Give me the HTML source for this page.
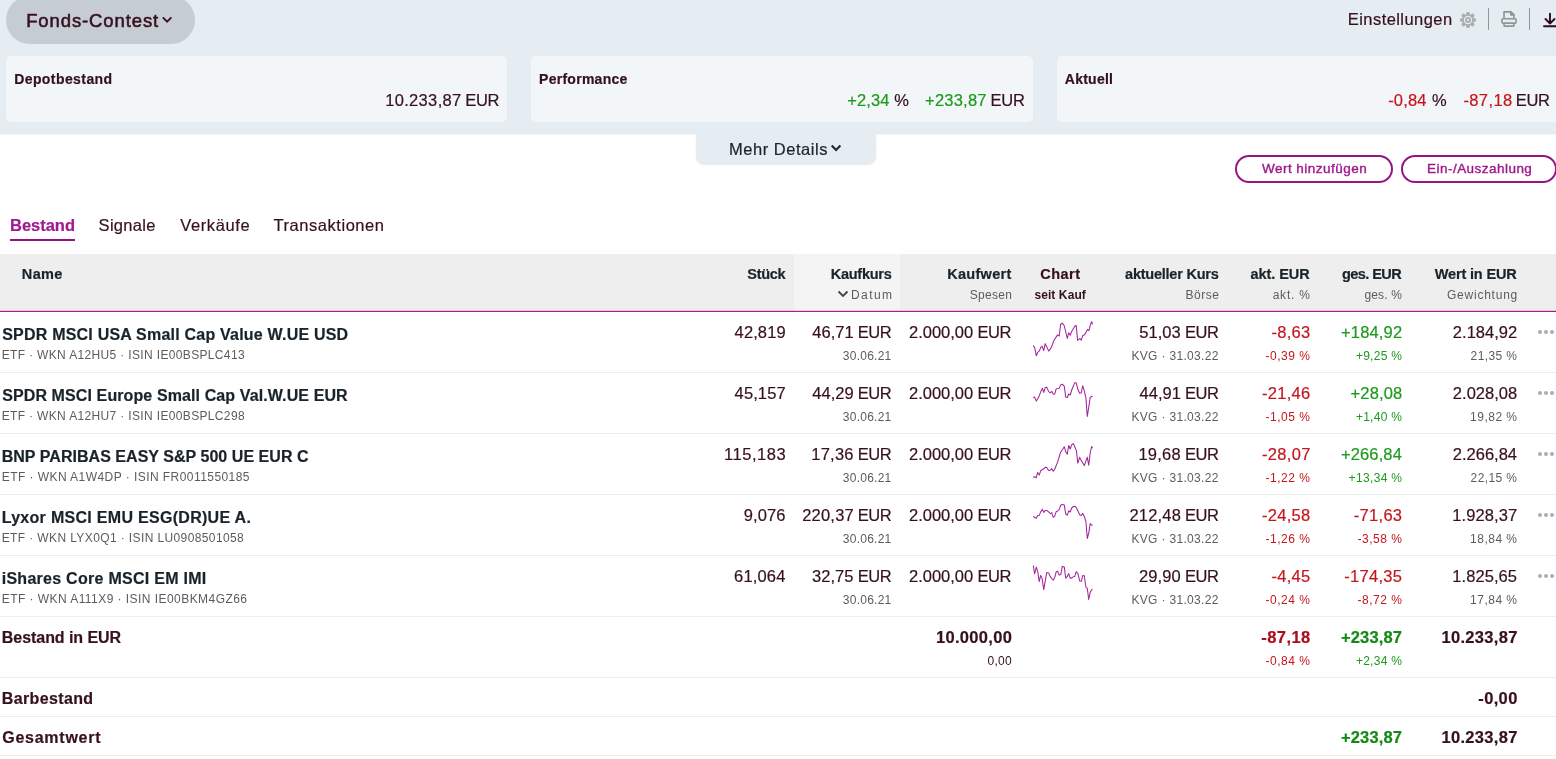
<!DOCTYPE html>
<html lang="de"><head><meta charset="utf-8"><title>Fonds-Contest</title>
<style>
html,body{margin:0;padding:0;}
body{width:1556px;height:759px;overflow:hidden;position:relative;background:#fff;
 font-family:"Liberation Sans",sans-serif;}
.abs{position:absolute;}
.page{left:0;top:0;width:1556px;height:759px;overflow:hidden;will-change:transform;}
.t{position:absolute;white-space:nowrap;line-height:1;}
.top{left:0;top:0;width:1556px;height:134px;background:#e5ecf2;}
.strip{left:0;top:134px;width:1556px;height:1px;background:#f1f5f8;}
.pill{left:6px;top:-4px;width:189px;height:48px;border-radius:24px;background:#c6ccd3;}
.card{top:56px;height:66px;border-radius:5px;background:#f2f6f9;}
.more{left:696px;top:134px;width:180px;height:29px;background:#e5ecf2;border-radius:0 0 7px 7px;
 box-shadow:0 2px 3px -1px rgba(0,0,0,.16);}
.btn{top:155px;height:24px;border:2px solid #9a1283;border-radius:14px;background:#fff;}
.ul{left:10px;top:239px;width:65px;height:2px;background:#9a0c80;}
.thead{left:0;top:254px;width:1556px;height:57px;background:#eeeeee;}
.sorted{left:794px;top:254px;width:106px;height:57px;background:#f4f4f4;}
.pl{left:0;top:311px;width:1556px;height:1px;background:#a11f8f;box-shadow:0 -1px 0 rgba(161,31,143,.18);}
.hl{left:0;width:1556px;height:1px;background:#ececec;}
.sep{top:8px;width:1px;height:22px;background:#8d9595;}
.dot{width:4px;height:4px;border-radius:2px;background:#a9aeb0;}
</style></head>
<body>
<div class="abs page">
<div class="abs strip"></div>
<div class="abs more"></div>
<div class="abs top"></div>
<div class="abs pill"></div>
<div class="abs card" style="left:6px;width:501px"></div>
<div class="abs card" style="left:531px;width:502px"></div>
<div class="abs card" style="left:1057px;width:520px"></div>
<div class="abs btn" style="left:1235px;width:154px"></div>
<div class="abs btn" style="left:1401px;width:152px"></div>
<div class="abs ul"></div>
<div class="abs thead"></div><div class="abs sorted"></div><div class="abs pl"></div>
<div class="abs hl" style="top:372px"></div>
<div class="abs hl" style="top:433px"></div>
<div class="abs hl" style="top:494px"></div>
<div class="abs hl" style="top:555px"></div>
<div class="abs hl" style="top:616px"></div>
<div class="abs hl" style="top:677px"></div>
<div class="abs hl" style="top:716px"></div>
<div class="abs hl" style="top:755px"></div>
<div class="abs sep" style="left:1488px"></div><div class="abs sep" style="left:1529px"></div>
<svg class="abs" style="left:161px;top:15px" width="12" height="10" viewBox="0 0 12 10"><path d="M1.8 2.3 L6.1 6.7 L10.4 2.3" fill="none" stroke="#36101f" stroke-width="1.8"/></svg>
<svg class="abs" style="left:830px;top:142px" width="12" height="11" viewBox="0 0 12 11"><path d="M1.7 3.4 L6.05 7.9 L10.4 3.4" fill="none" stroke="#1e2a2e" stroke-width="2.1"/></svg>
<svg class="abs" style="left:837px;top:289px" width="12" height="10" viewBox="0 0 12 10"><path d="M1.5 2.5 L6 7 L10.5 2.5" fill="none" stroke="#444" stroke-width="1.8"/></svg>
<svg class="abs" style="left:1460px;top:12px" width="16" height="16" viewBox="0 0 16 16"><path d="M6.64 3.08 L7.09 0.76 L8.91 0.76 L9.36 3.08 L10.51 3.56 L12.48 2.23 L13.77 3.52 L12.44 5.49 L12.92 6.64 L15.24 7.09 L15.24 8.91 L12.92 9.36 L12.44 10.51 L13.77 12.48 L12.48 13.77 L10.51 12.44 L9.36 12.92 L8.91 15.24 L7.09 15.24 L6.64 12.92 L5.49 12.44 L3.52 13.77 L2.23 12.48 L3.56 10.51 L3.08 9.36 L0.76 8.91 L0.76 7.09 L3.08 6.64 L3.56 5.49 L2.23 3.52 L3.52 2.23 L5.49 3.56Z" fill="#a9adad" stroke="#a9adad" stroke-width="1.4" stroke-linejoin="round"/><circle cx="8" cy="8" r="3.6" fill="none" stroke="#e5ecf2" stroke-width="1.25"/><circle cx="8" cy="8" r="1.15" fill="#e5ecf2"/></svg>
<svg class="abs" style="left:1501px;top:11px" width="16" height="16" viewBox="0 0 16 16"><g fill="none" stroke="#8d9595" stroke-width="1.6" stroke-linejoin="round"><path d="M3 7.5 V0.9 H10 L13 3.9 V7.5"/><path d="M9.6 0.9 V4.1 H13 Z" stroke-width="1.2" fill="#8d9595"/><rect x="0.9" y="7.7" width="14.2" height="4.6" rx="1.2"/><rect x="3" y="12.3" width="10" height="2.8" rx="0.6"/></g></svg>
<svg class="abs" style="left:1542px;top:12px" width="16" height="16" viewBox="0 0 16 16"><g fill="none" stroke="#2e0a1e" stroke-width="1.9" stroke-linecap="round" stroke-linejoin="round"><path d="M8 1.8 V11.5 M3.5 7 L8 11.5 L12.5 7"/><path d="M2 14.2 H16"/></g></svg>
<svg class="abs" style="left:1025px;top:312px" width="76" height="60" viewBox="0 0 76 60"><polyline points="8.1,33.6 9.6,35.4 11.3,43.7 12.7,40.3 14.4,38.9 15.8,35.2 17.2,34.4 18.7,38.6 20.2,31.6 21.7,34.8 23.7,39.1 25.3,37.2 26.9,34.0 28.5,29.3 30.4,26.1 32.6,22.9 34.2,24.0 35.6,12.5 37.3,11.1 39.3,13.8 42.3,26.5 43.7,20.7 45.2,23.3 46.7,19.4 49.8,14.2 51.2,13.4 52.6,28.5 54.6,26.5 56.3,28.1 57.7,23.6 59.3,22.9 60.9,20.6 62.5,17.4 63.9,18.6 65.2,13.4 66.6,9.6 67.6,12.3" fill="none" stroke="#a3249c" stroke-width="1.05" stroke-linejoin="round"/></svg>
<svg class="abs" style="left:1025px;top:373px" width="76" height="60" viewBox="0 0 76 60"><polyline points="8.1,24.4 9.6,24.1 11.3,28.1 12.7,25.7 14.2,22.9 15.8,18.6 17.4,15.3 18.7,19.4 20.2,14.6 21.7,14.2 23.7,18.6 25.3,19.8 26.7,18.3 28.3,21.2 29.7,21.0 31.2,15.7 34.2,15.4 35.6,11.9 37.3,11.2 39.3,13.3 40.7,24.1 42.3,24.5 43.7,21.0 45.2,22.0 46.7,17.0 49.8,9.6 51.2,9.9 52.8,16.2 54.7,20.2 56.3,19.8 57.7,12.7 59.3,17.8 60.9,24.9 62.3,43.5 63.9,33.2 65.2,24.5 66.6,23.3 67.6,23.6" fill="none" stroke="#a3249c" stroke-width="1.05" stroke-linejoin="round"/></svg>
<svg class="abs" style="left:1025px;top:434px" width="76" height="60" viewBox="0 0 76 60"><polyline points="8.1,43.3 9.5,42.7 11.3,43.7 12.7,38.4 14.2,41.1 15.7,36.8 18.7,34.8 20.4,33.2 21.7,33.6 23.7,36.5 25.3,36.2 26.7,34.6 28.3,37.2 29.7,35.2 32.6,28.1 35.6,18.3 37.3,15.8 39.3,12.7 40.7,17.8 42.3,20.2 43.7,11.5 45.2,15.0 46.7,10.7 48.4,9.6 49.8,13.0 51.4,16.6 52.8,29.1 54.6,23.3 56.3,26.5 59.3,31.6 60.9,26.9 62.3,23.3 63.7,31.2 65.2,19.0 66.6,12.5 67.6,14.1" fill="none" stroke="#a3249c" stroke-width="1.05" stroke-linejoin="round"/></svg>
<svg class="abs" style="left:1025px;top:495px" width="76" height="60" viewBox="0 0 76 60"><polyline points="8.1,21.4 9.6,22.3 11.3,23.3 12.7,20.4 14.2,20.4 15.8,16.6 17.4,14.4 18.7,17.4 20.4,15.4 21.7,15.4 23.7,17.0 25.3,18.6 26.7,17.6 28.3,22.3 29.7,21.2 31.2,16.6 32.6,16.2 34.2,14.6 35.6,10.3 37.3,9.6 39.3,10.1 40.7,19.0 42.3,20.2 43.7,15.8 45.2,17.0 46.7,13.0 48.4,11.5 49.8,11.2 51.4,12.7 54.7,19.8 56.3,20.6 57.7,18.3 59.3,21.4 60.9,26.5 62.3,43.5 63.9,37.2 65.2,28.5 66.6,30.2 67.6,30.1" fill="none" stroke="#a3249c" stroke-width="1.05" stroke-linejoin="round"/></svg>
<svg class="abs" style="left:1025px;top:556px" width="76" height="60" viewBox="0 0 76 60"><polyline points="8.3,9.5 9.6,17.8 11.3,11.1 12.7,15.4 14.2,25.5 15.7,19.4 17.2,22.9 18.7,33.6 21.7,16.6 23.7,17.0 25.3,20.6 26.7,22.5 28.3,24.1 29.7,21.4 31.2,15.8 32.6,15.2 34.2,19.1 35.7,18.6 37.3,10.4 39.3,11.1 40.7,22.1 42.3,20.4 43.7,17.6 45.2,22.1 46.7,22.1 48.4,20.7 49.8,20.4 51.2,15.7 52.8,17.4 54.7,24.9 56.3,25.3 57.7,19.6 59.3,19.8 60.9,31.2 62.3,32.4 63.7,43.5 65.2,36.4 66.6,33.8 67.6,33.6" fill="none" stroke="#a3249c" stroke-width="1.05" stroke-linejoin="round"/></svg>
<div class="abs dot" style="left:1538px;top:330px"></div>
<div class="abs dot" style="left:1544px;top:330px"></div>
<div class="abs dot" style="left:1550px;top:330px"></div>
<div class="abs dot" style="left:1538px;top:391px"></div>
<div class="abs dot" style="left:1544px;top:391px"></div>
<div class="abs dot" style="left:1550px;top:391px"></div>
<div class="abs dot" style="left:1538px;top:452px"></div>
<div class="abs dot" style="left:1544px;top:452px"></div>
<div class="abs dot" style="left:1550px;top:452px"></div>
<div class="abs dot" style="left:1538px;top:513px"></div>
<div class="abs dot" style="left:1544px;top:513px"></div>
<div class="abs dot" style="left:1550px;top:513px"></div>
<div class="abs dot" style="left:1538px;top:574px"></div>
<div class="abs dot" style="left:1544px;top:574px"></div>
<div class="abs dot" style="left:1550px;top:574px"></div>
<div class="t" style="left:26.15px;top:12px;font-size:18.5px;color:#36101f;letter-spacing:0.896px;-webkit-text-stroke:0.55px #36101f;">Fonds-Contest</div>
<div class="t" style="left:1347.85px;top:11px;font-size:16.5px;color:#36101f;letter-spacing:0.429px;-webkit-text-stroke:0.2px #36101f;">Einstellungen</div>
<div class="t" style="left:14.15px;top:72px;font-size:14px;color:#36101f;font-weight:700;letter-spacing:0.423px;-webkit-text-stroke:0.2px #36101f;">Depotbestand</div>
<div class="t" style="left:385.15px;top:92px;font-size:16.5px;color:#36101f;letter-spacing:0.338px;-webkit-text-stroke:0.2px #36101f;">10.233,87</div>
<div class="t" style="left:465.35px;top:92px;font-size:16.5px;color:#36101f;letter-spacing:-0.325px;-webkit-text-stroke:0.2px #36101f;">EUR</div>
<div class="t" style="left:539.05px;top:72px;font-size:14px;color:#36101f;font-weight:700;letter-spacing:0.270px;-webkit-text-stroke:0.2px #36101f;">Performance</div>
<div class="t" style="left:847.15px;top:92px;font-size:16.5px;color:#1c9a1c;letter-spacing:0.150px;-webkit-text-stroke:0.2px #1c9a1c;">+2,34</div>
<div class="t" style="left:894.20px;top:92px;font-size:16.5px;color:#36101f;-webkit-text-stroke:0.2px #36101f;">%</div>
<div class="t" style="left:925.05px;top:92px;font-size:16.5px;color:#1c9a1c;letter-spacing:0.225px;-webkit-text-stroke:0.2px #1c9a1c;">+233,87</div>
<div class="t" style="left:990.45px;top:92px;font-size:16.5px;color:#36101f;letter-spacing:-0.225px;-webkit-text-stroke:0.2px #36101f;">EUR</div>
<div class="t" style="left:1064.85px;top:72px;font-size:14px;color:#36101f;font-weight:700;letter-spacing:0.233px;-webkit-text-stroke:0.2px #36101f;">Aktuell</div>
<div class="t" style="left:1388.25px;top:92px;font-size:16.5px;color:#c4161c;letter-spacing:0.125px;-webkit-text-stroke:0.2px #c4161c;">-0,84</div>
<div class="t" style="left:1431.90px;top:92px;font-size:16.5px;color:#36101f;-webkit-text-stroke:0.2px #36101f;">%</div>
<div class="t" style="left:1463.45px;top:92px;font-size:16.5px;color:#c4161c;letter-spacing:0.380px;-webkit-text-stroke:0.2px #c4161c;">-87,18</div>
<div class="t" style="left:1515.75px;top:92px;font-size:16.5px;color:#36101f;letter-spacing:-0.375px;-webkit-text-stroke:0.2px #36101f;">EUR</div>
<div class="t" style="left:728.95px;top:141px;font-size:16.5px;color:#18232a;letter-spacing:0.541px;-webkit-text-stroke:0.2px #18232a;">Mehr Details</div>
<div class="t" style="left:1261.95px;top:162px;font-size:13.5px;color:#9f1a8e;letter-spacing:0.482px;-webkit-text-stroke:0.4px #9f1a8e;">Wert hinzufügen</div>
<div class="t" style="left:1427.10px;top:162px;font-size:13.5px;color:#9f1a8e;letter-spacing:0.461px;-webkit-text-stroke:0.4px #9f1a8e;">Ein-/Auszahlung</div>
<div class="t" style="left:10.10px;top:217px;font-size:16.5px;color:#9f1a8e;font-weight:700;letter-spacing:-0.033px;-webkit-text-stroke:0.2px #9f1a8e;">Bestand</div>
<div class="t" style="left:98.55px;top:217px;font-size:16.5px;color:#36101f;letter-spacing:0.325px;-webkit-text-stroke:0.2px #36101f;">Signale</div>
<div class="t" style="left:180.20px;top:217px;font-size:16.5px;color:#36101f;letter-spacing:0.614px;-webkit-text-stroke:0.2px #36101f;">Verkäufe</div>
<div class="t" style="left:273.55px;top:217px;font-size:16.5px;color:#36101f;letter-spacing:0.538px;-webkit-text-stroke:0.2px #36101f;">Transaktionen</div>
<div class="t" style="left:21.85px;top:267px;font-size:14.5px;color:#18232a;font-weight:700;letter-spacing:0.317px;-webkit-text-stroke:0.2px #18232a;">Name</div>
<div class="t" style="left:747.25px;top:267px;font-size:14.5px;color:#18232a;font-weight:700;letter-spacing:-0.262px;-webkit-text-stroke:0.2px #18232a;">Stück</div>
<div class="t" style="left:830.65px;top:267px;font-size:14.5px;color:#18232a;font-weight:700;letter-spacing:-0.236px;-webkit-text-stroke:0.2px #18232a;">Kaufkurs</div>
<div class="t" style="left:851.00px;top:289px;font-size:12px;color:#5c5c5c;letter-spacing:1.425px;">Datum</div>
<div class="t" style="left:947.25px;top:267px;font-size:14.5px;color:#18232a;font-weight:700;letter-spacing:0.279px;-webkit-text-stroke:0.2px #18232a;">Kaufwert</div>
<div class="t" style="left:969.80px;top:289px;font-size:12px;color:#5c5c5c;letter-spacing:0.280px;">Spesen</div>
<div class="t" style="left:1040.20px;top:267px;font-size:14.5px;color:#36101f;font-weight:700;letter-spacing:0.488px;-webkit-text-stroke:0.2px #36101f;">Chart</div>
<div class="t" style="left:1034.40px;top:289px;font-size:12px;color:#36101f;font-weight:700;letter-spacing:0.094px;">seit Kauf</div>
<div class="t" style="left:1125.05px;top:267px;font-size:14.5px;color:#18232a;font-weight:700;letter-spacing:-0.231px;-webkit-text-stroke:0.2px #18232a;">aktueller Kurs</div>
<div class="t" style="left:1185.40px;top:289px;font-size:12px;color:#5c5c5c;letter-spacing:0.537px;">Börse</div>
<div class="t" style="left:1250.55px;top:267px;font-size:14.5px;color:#18232a;font-weight:700;letter-spacing:-0.079px;-webkit-text-stroke:0.2px #18232a;">akt. EUR</div>
<div class="t" style="left:1272.70px;top:289px;font-size:12px;color:#5c5c5c;letter-spacing:0.760px;">akt. %</div>
<div class="t" style="left:1342.10px;top:267px;font-size:14.5px;color:#18232a;font-weight:700;letter-spacing:-0.586px;-webkit-text-stroke:0.2px #18232a;">ges. EUR</div>
<div class="t" style="left:1364.40px;top:289px;font-size:12px;color:#5c5c5c;letter-spacing:0.170px;">ges. %</div>
<div class="t" style="left:1434.80px;top:267px;font-size:14.5px;color:#18232a;font-weight:700;letter-spacing:-0.165px;-webkit-text-stroke:0.2px #18232a;">Wert in EUR</div>
<div class="t" style="left:1447.00px;top:289px;font-size:12px;color:#5c5c5c;letter-spacing:0.767px;">Gewichtung</div>
<div class="t" style="left:2.20px;top:327px;font-size:16px;color:#18232a;font-weight:700;letter-spacing:0.211px;-webkit-text-stroke:0.2px #18232a;">SPDR MSCI USA Small Cap Value W.UE USD</div>
<div class="t" style="left:1.70px;top:349px;font-size:12px;color:#5c5c5c;letter-spacing:0.347px;">ETF · WKN A12HU5 · ISIN IE00BSPLC413</div>
<div class="t" style="left:734.60px;top:324px;font-size:16.5px;color:#36101f;letter-spacing:0.110px;-webkit-text-stroke:0.2px #36101f;">42,819</div>
<div class="t" style="left:812.25px;top:324px;font-size:16.5px;color:#36101f;letter-spacing:0.062px;-webkit-text-stroke:0.2px #36101f;">46,71</div>
<div class="t" style="left:857.75px;top:324px;font-size:16.5px;color:#36101f;letter-spacing:-0.475px;-webkit-text-stroke:0.2px #36101f;">EUR</div>
<div class="t" style="left:842.80px;top:350px;font-size:12px;color:#5c5c5c;letter-spacing:0.250px;">30.06.21</div>
<div class="t" style="left:909.05px;top:324px;font-size:16.5px;color:#36101f;letter-spacing:-0.014px;-webkit-text-stroke:0.2px #36101f;">2.000,00</div>
<div class="t" style="left:977.45px;top:324px;font-size:16.5px;color:#36101f;letter-spacing:-0.475px;-webkit-text-stroke:0.2px #36101f;">EUR</div>
<div class="t" style="left:1139.20px;top:324px;font-size:16.5px;color:#36101f;letter-spacing:0.062px;-webkit-text-stroke:0.2px #36101f;">51,03</div>
<div class="t" style="left:1184.95px;top:324px;font-size:16.5px;color:#36101f;letter-spacing:-0.475px;-webkit-text-stroke:0.2px #36101f;">EUR</div>
<div class="t" style="left:1131.40px;top:350px;font-size:12px;color:#5c5c5c;letter-spacing:0.335px;">KVG · 31.03.22</div>
<div class="t" style="left:1271.50px;top:324px;font-size:16.5px;color:#c4161c;letter-spacing:0.275px;-webkit-text-stroke:0.2px #c4161c;">-8,63</div>
<div class="t" style="left:1265.60px;top:350px;font-size:12px;color:#c4161c;letter-spacing:0.500px;">-0,39 %</div>
<div class="t" style="left:1341.00px;top:324px;font-size:16.5px;color:#1c9a1c;letter-spacing:0.167px;-webkit-text-stroke:0.2px #1c9a1c;">+184,92</div>
<div class="t" style="left:1355.90px;top:350px;font-size:12px;color:#1c9a1c;letter-spacing:0.267px;">+9,25 %</div>
<div class="t" style="left:1452.85px;top:324px;font-size:16.5px;color:#36101f;letter-spacing:0.021px;-webkit-text-stroke:0.2px #36101f;">2.184,92</div>
<div class="t" style="left:1470.60px;top:350px;font-size:12px;color:#5c5c5c;letter-spacing:0.400px;">21,35 %</div>
<div class="t" style="left:2.20px;top:388px;font-size:16px;color:#18232a;font-weight:700;letter-spacing:0.107px;-webkit-text-stroke:0.2px #18232a;">SPDR MSCI Europe Small Cap Val.W.UE EUR</div>
<div class="t" style="left:1.70px;top:410px;font-size:12px;color:#5c5c5c;letter-spacing:0.347px;">ETF · WKN A12HU7 · ISIN IE00BSPLC298</div>
<div class="t" style="left:734.60px;top:385px;font-size:16.5px;color:#36101f;letter-spacing:0.110px;-webkit-text-stroke:0.2px #36101f;">45,157</div>
<div class="t" style="left:812.25px;top:385px;font-size:16.5px;color:#36101f;letter-spacing:0.062px;-webkit-text-stroke:0.2px #36101f;">44,29</div>
<div class="t" style="left:857.75px;top:385px;font-size:16.5px;color:#36101f;letter-spacing:-0.475px;-webkit-text-stroke:0.2px #36101f;">EUR</div>
<div class="t" style="left:842.80px;top:411px;font-size:12px;color:#5c5c5c;letter-spacing:0.250px;">30.06.21</div>
<div class="t" style="left:909.05px;top:385px;font-size:16.5px;color:#36101f;letter-spacing:-0.014px;-webkit-text-stroke:0.2px #36101f;">2.000,00</div>
<div class="t" style="left:977.45px;top:385px;font-size:16.5px;color:#36101f;letter-spacing:-0.475px;-webkit-text-stroke:0.2px #36101f;">EUR</div>
<div class="t" style="left:1139.45px;top:385px;font-size:16.5px;color:#36101f;letter-spacing:0.062px;-webkit-text-stroke:0.2px #36101f;">44,91</div>
<div class="t" style="left:1184.95px;top:385px;font-size:16.5px;color:#36101f;letter-spacing:-0.475px;-webkit-text-stroke:0.2px #36101f;">EUR</div>
<div class="t" style="left:1131.40px;top:411px;font-size:12px;color:#5c5c5c;letter-spacing:0.335px;">KVG · 31.03.22</div>
<div class="t" style="left:1261.95px;top:385px;font-size:16.5px;color:#c4161c;letter-spacing:0.280px;-webkit-text-stroke:0.2px #c4161c;">-21,46</div>
<div class="t" style="left:1265.60px;top:411px;font-size:12px;color:#c4161c;letter-spacing:0.500px;">-1,05 %</div>
<div class="t" style="left:1350.55px;top:385px;font-size:16.5px;color:#1c9a1c;letter-spacing:0.140px;-webkit-text-stroke:0.2px #1c9a1c;">+28,08</div>
<div class="t" style="left:1355.90px;top:411px;font-size:12px;color:#1c9a1c;letter-spacing:0.267px;">+1,40 %</div>
<div class="t" style="left:1452.85px;top:385px;font-size:16.5px;color:#36101f;letter-spacing:0.021px;-webkit-text-stroke:0.2px #36101f;">2.028,08</div>
<div class="t" style="left:1470.10px;top:411px;font-size:12px;color:#5c5c5c;letter-spacing:0.483px;">19,82 %</div>
<div class="t" style="left:1.70px;top:449px;font-size:16px;color:#18232a;font-weight:700;letter-spacing:0.039px;-webkit-text-stroke:0.2px #18232a;">BNP PARIBAS EASY S&amp;P 500 UE EUR C</div>
<div class="t" style="left:1.70px;top:471px;font-size:12px;color:#5c5c5c;letter-spacing:0.444px;">ETF · WKN A1W4DP · ISIN FR0011550185</div>
<div class="t" style="left:724.05px;top:446px;font-size:16.5px;color:#36101f;letter-spacing:0.517px;-webkit-text-stroke:0.2px #36101f;">115,183</div>
<div class="t" style="left:811.25px;top:446px;font-size:16.5px;color:#36101f;letter-spacing:0.250px;-webkit-text-stroke:0.2px #36101f;">17,36</div>
<div class="t" style="left:857.75px;top:446px;font-size:16.5px;color:#36101f;letter-spacing:-0.475px;-webkit-text-stroke:0.2px #36101f;">EUR</div>
<div class="t" style="left:842.80px;top:472px;font-size:12px;color:#5c5c5c;letter-spacing:0.250px;">30.06.21</div>
<div class="t" style="left:909.05px;top:446px;font-size:16.5px;color:#36101f;letter-spacing:-0.014px;-webkit-text-stroke:0.2px #36101f;">2.000,00</div>
<div class="t" style="left:977.45px;top:446px;font-size:16.5px;color:#36101f;letter-spacing:-0.475px;-webkit-text-stroke:0.2px #36101f;">EUR</div>
<div class="t" style="left:1138.45px;top:446px;font-size:16.5px;color:#36101f;letter-spacing:0.250px;-webkit-text-stroke:0.2px #36101f;">19,68</div>
<div class="t" style="left:1184.95px;top:446px;font-size:16.5px;color:#36101f;letter-spacing:-0.475px;-webkit-text-stroke:0.2px #36101f;">EUR</div>
<div class="t" style="left:1131.40px;top:472px;font-size:12px;color:#5c5c5c;letter-spacing:0.335px;">KVG · 31.03.22</div>
<div class="t" style="left:1261.95px;top:446px;font-size:16.5px;color:#c4161c;letter-spacing:0.330px;-webkit-text-stroke:0.2px #c4161c;">-28,07</div>
<div class="t" style="left:1265.60px;top:472px;font-size:12px;color:#c4161c;letter-spacing:0.500px;">-1,22 %</div>
<div class="t" style="left:1341.00px;top:446px;font-size:16.5px;color:#1c9a1c;letter-spacing:0.125px;-webkit-text-stroke:0.2px #1c9a1c;">+266,84</div>
<div class="t" style="left:1348.60px;top:472px;font-size:12px;color:#1c9a1c;letter-spacing:0.343px;">+13,34 %</div>
<div class="t" style="left:1452.85px;top:446px;font-size:16.5px;color:#36101f;letter-spacing:-0.014px;-webkit-text-stroke:0.2px #36101f;">2.266,84</div>
<div class="t" style="left:1470.60px;top:472px;font-size:12px;color:#5c5c5c;letter-spacing:0.400px;">22,15 %</div>
<div class="t" style="left:1.70px;top:510px;font-size:16px;color:#18232a;font-weight:700;letter-spacing:0.296px;-webkit-text-stroke:0.2px #18232a;">Lyxor MSCI EMU ESG(DR)UE A.</div>
<div class="t" style="left:1.70px;top:532px;font-size:12px;color:#5c5c5c;letter-spacing:0.386px;">ETF · WKN LYX0Q1 · ISIN LU0908501058</div>
<div class="t" style="left:743.65px;top:507px;font-size:16.5px;color:#36101f;letter-spacing:0.125px;-webkit-text-stroke:0.2px #36101f;">9,076</div>
<div class="t" style="left:802.20px;top:507px;font-size:16.5px;color:#36101f;letter-spacing:0.210px;-webkit-text-stroke:0.2px #36101f;">220,37</div>
<div class="t" style="left:857.75px;top:507px;font-size:16.5px;color:#36101f;letter-spacing:-0.475px;-webkit-text-stroke:0.2px #36101f;">EUR</div>
<div class="t" style="left:842.80px;top:533px;font-size:12px;color:#5c5c5c;letter-spacing:0.250px;">30.06.21</div>
<div class="t" style="left:909.05px;top:507px;font-size:16.5px;color:#36101f;letter-spacing:-0.014px;-webkit-text-stroke:0.2px #36101f;">2.000,00</div>
<div class="t" style="left:977.45px;top:507px;font-size:16.5px;color:#36101f;letter-spacing:-0.475px;-webkit-text-stroke:0.2px #36101f;">EUR</div>
<div class="t" style="left:1129.40px;top:507px;font-size:16.5px;color:#36101f;letter-spacing:0.210px;-webkit-text-stroke:0.2px #36101f;">212,48</div>
<div class="t" style="left:1184.95px;top:507px;font-size:16.5px;color:#36101f;letter-spacing:-0.475px;-webkit-text-stroke:0.2px #36101f;">EUR</div>
<div class="t" style="left:1131.40px;top:533px;font-size:12px;color:#5c5c5c;letter-spacing:0.335px;">KVG · 31.03.22</div>
<div class="t" style="left:1261.95px;top:507px;font-size:16.5px;color:#c4161c;letter-spacing:0.280px;-webkit-text-stroke:0.2px #c4161c;">-24,58</div>
<div class="t" style="left:1265.60px;top:533px;font-size:12px;color:#c4161c;letter-spacing:0.500px;">-1,26 %</div>
<div class="t" style="left:1353.85px;top:507px;font-size:16.5px;color:#c4161c;letter-spacing:0.280px;-webkit-text-stroke:0.2px #c4161c;">-71,63</div>
<div class="t" style="left:1357.50px;top:533px;font-size:12px;color:#c4161c;letter-spacing:0.500px;">-3,58 %</div>
<div class="t" style="left:1452.35px;top:507px;font-size:16.5px;color:#36101f;letter-spacing:0.093px;-webkit-text-stroke:0.2px #36101f;">1.928,37</div>
<div class="t" style="left:1470.10px;top:533px;font-size:12px;color:#5c5c5c;letter-spacing:0.483px;">18,84 %</div>
<div class="t" style="left:1.70px;top:571px;font-size:16px;color:#18232a;font-weight:700;letter-spacing:0.272px;-webkit-text-stroke:0.2px #18232a;">iShares Core MSCI EM IMI</div>
<div class="t" style="left:1.70px;top:593px;font-size:12px;color:#5c5c5c;letter-spacing:0.449px;">ETF · WKN A111X9 · ISIN IE00BKM4GZ66</div>
<div class="t" style="left:734.10px;top:568px;font-size:16.5px;color:#36101f;letter-spacing:0.160px;-webkit-text-stroke:0.2px #36101f;">61,064</div>
<div class="t" style="left:812.00px;top:568px;font-size:16.5px;color:#36101f;letter-spacing:0.062px;-webkit-text-stroke:0.2px #36101f;">32,75</div>
<div class="t" style="left:857.75px;top:568px;font-size:16.5px;color:#36101f;letter-spacing:-0.475px;-webkit-text-stroke:0.2px #36101f;">EUR</div>
<div class="t" style="left:842.80px;top:594px;font-size:12px;color:#5c5c5c;letter-spacing:0.250px;">30.06.21</div>
<div class="t" style="left:909.05px;top:568px;font-size:16.5px;color:#36101f;letter-spacing:-0.014px;-webkit-text-stroke:0.2px #36101f;">2.000,00</div>
<div class="t" style="left:977.45px;top:568px;font-size:16.5px;color:#36101f;letter-spacing:-0.475px;-webkit-text-stroke:0.2px #36101f;">EUR</div>
<div class="t" style="left:1138.95px;top:568px;font-size:16.5px;color:#36101f;letter-spacing:0.125px;-webkit-text-stroke:0.2px #36101f;">29,90</div>
<div class="t" style="left:1184.95px;top:568px;font-size:16.5px;color:#36101f;letter-spacing:-0.475px;-webkit-text-stroke:0.2px #36101f;">EUR</div>
<div class="t" style="left:1131.40px;top:594px;font-size:12px;color:#5c5c5c;letter-spacing:0.335px;">KVG · 31.03.22</div>
<div class="t" style="left:1271.50px;top:568px;font-size:16.5px;color:#c4161c;letter-spacing:0.275px;-webkit-text-stroke:0.2px #c4161c;">-4,45</div>
<div class="t" style="left:1265.60px;top:594px;font-size:12px;color:#c4161c;letter-spacing:0.500px;">-0,24 %</div>
<div class="t" style="left:1344.30px;top:568px;font-size:16.5px;color:#c4161c;letter-spacing:0.283px;-webkit-text-stroke:0.2px #c4161c;">-174,35</div>
<div class="t" style="left:1357.50px;top:594px;font-size:12px;color:#c4161c;letter-spacing:0.500px;">-8,72 %</div>
<div class="t" style="left:1452.35px;top:568px;font-size:16.5px;color:#36101f;letter-spacing:0.057px;-webkit-text-stroke:0.2px #36101f;">1.825,65</div>
<div class="t" style="left:1470.10px;top:594px;font-size:12px;color:#5c5c5c;letter-spacing:0.483px;">17,84 %</div>
<div class="t" style="left:1.80px;top:630px;font-size:16px;color:#36101f;font-weight:700;letter-spacing:-0.050px;-webkit-text-stroke:0.2px #36101f;">Bestand in EUR</div>
<div class="t" style="left:935.90px;top:629px;font-size:16.5px;color:#36101f;font-weight:700;letter-spacing:0.331px;-webkit-text-stroke:0.2px #36101f;">10.000,00</div>
<div class="t" style="left:987.55px;top:655px;font-size:12px;color:#36101f;letter-spacing:0.250px;">0,00</div>
<div class="t" style="left:1261.20px;top:629px;font-size:16.5px;color:#a80f1c;font-weight:700;letter-spacing:0.460px;-webkit-text-stroke:0.2px #a80f1c;">-87,18</div>
<div class="t" style="left:1265.60px;top:655px;font-size:12px;color:#c4161c;letter-spacing:0.500px;">-0,84 %</div>
<div class="t" style="left:1341.00px;top:629px;font-size:16.5px;color:#128a14;font-weight:700;letter-spacing:0.150px;-webkit-text-stroke:0.2px #128a14;">+233,87</div>
<div class="t" style="left:1355.90px;top:655px;font-size:12px;color:#1c9a1c;letter-spacing:0.267px;">+2,34 %</div>
<div class="t" style="left:1441.40px;top:629px;font-size:16.5px;color:#36101f;font-weight:700;letter-spacing:0.319px;-webkit-text-stroke:0.2px #36101f;">10.233,87</div>
<div class="t" style="left:1.80px;top:691px;font-size:16px;color:#36101f;font-weight:700;letter-spacing:0.367px;-webkit-text-stroke:0.2px #36101f;">Barbestand</div>
<div class="t" style="left:1478.30px;top:690px;font-size:16.5px;color:#36101f;font-weight:700;letter-spacing:0.350px;-webkit-text-stroke:0.2px #36101f;">-0,00</div>
<div class="t" style="left:2.30px;top:730px;font-size:16px;color:#36101f;font-weight:700;letter-spacing:0.733px;-webkit-text-stroke:0.2px #36101f;">Gesamtwert</div>
<div class="t" style="left:1341.00px;top:729px;font-size:16.5px;color:#128a14;font-weight:700;letter-spacing:0.150px;-webkit-text-stroke:0.2px #128a14;">+233,87</div>
<div class="t" style="left:1441.40px;top:729px;font-size:16.5px;color:#36101f;font-weight:700;letter-spacing:0.319px;-webkit-text-stroke:0.2px #36101f;">10.233,87</div>
</div></body></html>
